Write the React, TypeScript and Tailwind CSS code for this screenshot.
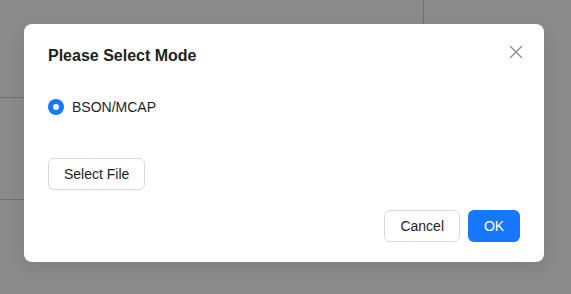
export default function App() {
    return (
        <div className="relative w-[571px] h-[294px] overflow-hidden bg-white font-['Liberation_Sans',Arial,sans-serif]">
            {/* page underneath the mask */}
            <div className="flex flex-row w-full h-full">
                <div className="w-[423px] flex flex-col">
                    <div className="h-[98px] border-b border-[#d0d0d0]" />
                    <div className="h-[102px] border-b border-[#d0d0d0]" />
                </div>
                <div className="flex-1">
                    <div className="h-[40px] border-l border-[#d0d0d0]" />
                </div>
            </div>

            {/* mask + dialog */}
            <div className="absolute inset-0 bg-black/[0.46] pt-6 pl-6">
                <div className="w-[520px] h-[238px] bg-white rounded-lg shadow-[0_6px_16px_rgba(0,0,0,0.08)] px-6 pt-5 pb-5 flex flex-col relative">
                    <button className="absolute top-[20px] right-[20px] w-[16px] h-[16px] flex items-center justify-center">
                        <svg width="14" height="14" viewBox="0 0 14 14" fill="none" stroke="#8c8c8c" strokeWidth="1.4">
                            <path d="M1 1 L13 13 M13 1 L1 13" />
                        </svg>
                    </button>
                    <h2 className="text-base font-bold leading-6 text-[#1f1f1f]">Please Select Mode</h2>

                    <label className="mt-7 flex items-center gap-2 h-[22px] text-sm text-[#1f1f1f]">
                        <span className="w-4 h-4 rounded-full bg-[#1677ff] flex items-center justify-center">
                            <span className="w-1.5 h-1.5 rounded-full bg-white" />
                        </span>
                        <span>BSON/MCAP</span>
                    </label>

                    <div className="mt-10">
                        <button className="h-8 px-[15px] rounded-md border border-[#d9d9d9] bg-white text-sm text-[#1f1f1f] shadow-[0_2px_0_rgba(0,0,0,0.02)]">
                            Select File
                        </button>
                    </div>

                    <div className="mt-auto flex justify-end gap-2">
                        <button className="h-8 px-[15px] rounded-md border border-[#d9d9d9] bg-white text-sm text-[#1f1f1f]">
                            Cancel
                        </button>
                        <button className="h-8 w-[52px] rounded-md bg-[#1677ff] text-sm text-white">
                            OK
                        </button>
                    </div>
                </div>
            </div>
        </div>
    );
}
